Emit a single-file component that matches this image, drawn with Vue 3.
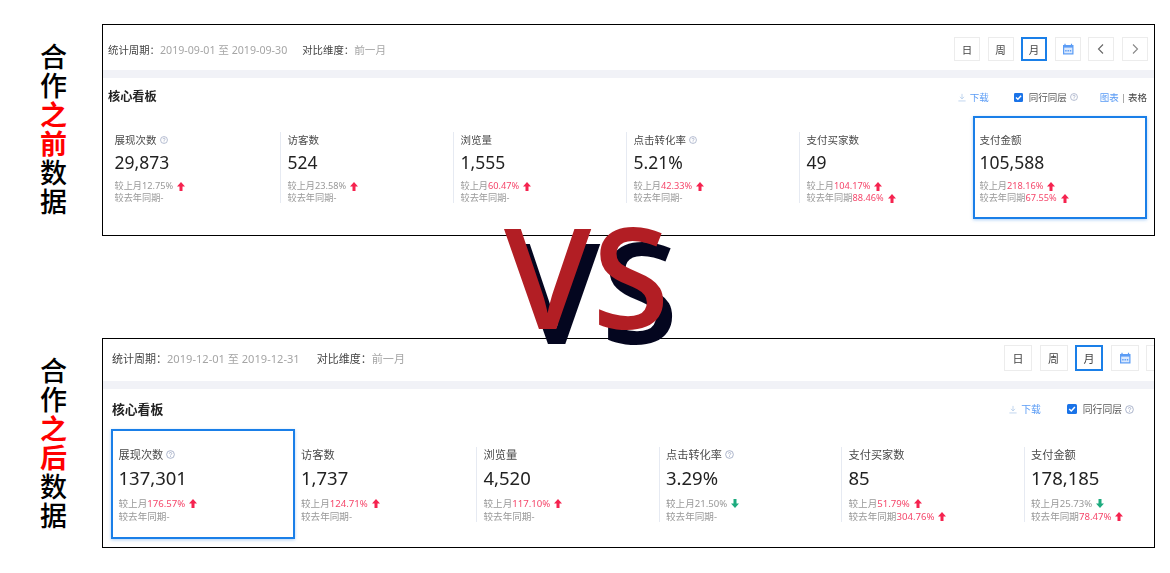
<script setup>
const panels = [
  {
    key: 'before',
    label: [['合', 0], ['作', 0], ['之', 1], ['前', 1], ['数', 0], ['据', 0]],
    range: '2019-09-01 至 2019-09-30',
    modes: true,
    selected: 5,
    metrics: [
      { title: '展现次数', help: true, value: '29,873', mom: '12.75%', momHot: false, momDir: 'up' },
      { title: '访客数', value: '524', mom: '23.58%', momHot: false, momDir: 'up' },
      { title: '浏览量', value: '1,555', mom: '60.47%', momHot: true, momDir: 'up' },
      { title: '点击转化率', help: true, value: '5.21%', mom: '42.33%', momHot: true, momDir: 'up' },
      { title: '支付买家数', value: '49', mom: '104.17%', momHot: true, momDir: 'up', yoy: '88.46%' },
      { title: '支付金额', value: '105,588', mom: '218.16%', momHot: true, momDir: 'up', yoy: '67.55%' }
    ]
  },
  {
    key: 'after',
    label: [['合', 0], ['作', 0], ['之', 1], ['后', 1], ['数', 0], ['据', 0]],
    range: '2019-12-01 至 2019-12-31',
    modes: false,
    selected: 0,
    metrics: [
      { title: '展现次数', help: true, value: '137,301', mom: '176.57%', momHot: true, momDir: 'up' },
      { title: '访客数', value: '1,737', mom: '124.71%', momHot: true, momDir: 'up' },
      { title: '浏览量', value: '4,520', mom: '117.10%', momHot: true, momDir: 'up' },
      { title: '点击转化率', help: true, value: '3.29%', mom: '21.50%', momHot: false, momDir: 'down' },
      { title: '支付买家数', value: '85', mom: '51.79%', momHot: true, momDir: 'up', yoy: '304.76%' },
      { title: '支付金额', value: '178,185', mom: '25.73%', momHot: false, momDir: 'down', yoy: '78.47%' }
    ]
  }
]
</script>

<template>
  <div class="page">
    <section v-for="p in panels" :key="p.key" class="row" :class="p.key">
      <div class="side">
        <span v-for="(c, i) in p.label" :key="i" class="side-char" :class="{ red: c[1] }">{{ c[0] }}</span>
      </div>
      <div class="panel">
        <div class="inner">
          <div class="toolbar">
            <div class="period">
              <span class="lab">统计周期：</span><span class="val">{{ p.range }}</span>
              <span class="lab second">对比维度：</span><span class="val">前一月</span>
            </div>
            <div class="btns">
              <span class="btn">日</span>
              <span class="btn">周</span>
              <span class="btn on">月</span>
              <span class="btn">
                <svg class="cal" viewBox="0 0 12 12">
                  <path d="M1 2h10.500v9.500H1z" fill="#5b9cf5" />
                  <path d="M3 .7v2M9.500 .7v2" stroke="#5b9cf5" stroke-width="1.200" />
                  <path d="M2.200 4.600h8.100v5.700H2.200z" fill="#dbe9fd" />
                  <path d="M3.200 7h1.400v1.500H3.200zM5.500 7h1.400v1.500H5.500zM7.800 7h1.400v1.500H7.800z" fill="#5b9cf5" />
                </svg>
              </span>
              <span class="btn">
                <svg class="chev" viewBox="0 0 10 12"><path d="M7 1.500 2.500 6 7 10.500" fill="none" stroke="#666" stroke-width="1.100" /></svg>
              </span>
              <span class="btn">
                <svg class="chev" viewBox="0 0 10 12"><path d="M3 1.500 7.500 6 3 10.500" fill="none" stroke="#888" stroke-width="1.100" /></svg>
              </span>
            </div>
          </div>
          <div class="band"></div>
          <div class="head">
            <span class="heading">核心看板</span>
            <div class="tools">
              <span class="dl">
                <svg class="dl-icon" viewBox="0 0 10 10"><path d="M5 .5v6M2.500 4.200 5 6.800l2.500-2.600M.5 9.300h9" fill="none" stroke="#a9c4e8" stroke-width=".9" /></svg>
                <span>下载</span>
              </span>
              <span class="peer">
                <svg class="check" viewBox="0 0 10 10">
                  <rect width="10" height="10" rx="1.500" fill="#1a73e8" />
                  <path d="M2.200 5 4.300 7 7.900 3" fill="none" stroke="#fff" stroke-width="1.500" />
                </svg>
                <span class="peer-text">同行同层</span>
                <svg class="help" viewBox="0 0 10 10">
                  <circle cx="5" cy="5" r="4.300" fill="none" stroke="#9aa5c0" stroke-width=".9" />
                  <path d="M3.700 4c0-1.700 2.700-1.700 2.700 0 0 1-1.400 1-1.400 2.100M5 6.900v.9" fill="none" stroke="#9aa5c0" stroke-width=".9" />
                </svg>
              </span>
              <span v-if="p.modes" class="modes"><em>图表</em><i>|</i><b>表格</b></span>
            </div>
          </div>
          <div class="metrics">
            <div v-for="(m, i) in p.metrics" :key="m.title" class="cell" :class="{ first: i === 0, sel: i === p.selected }">
              <div class="m-title">
                <span>{{ m.title }}</span>
                <svg v-if="m.help" class="help" viewBox="0 0 10 10">
                  <circle cx="5" cy="5" r="4.300" fill="none" stroke="#9aa5c0" stroke-width=".9" />
                  <path d="M3.700 4c0-1.700 2.700-1.700 2.700 0 0 1-1.400 1-1.400 2.100M5 6.900v.9" fill="none" stroke="#9aa5c0" stroke-width=".9" />
                </svg>
              </div>
              <div class="m-value">{{ m.value }}</div>
              <div class="m-sub first-sub">
                <span>较上月</span><span :class="{ hot: m.momHot }">{{ m.mom }}</span>
                <svg class="arrow" viewBox="0 0 8 9">
                  <path v-if="m.momDir === 'up'" d="M4 0 8 4.500H5.500V9h-3V4.500H0z" fill="#f5234f" />
                  <path v-else d="M4 9 8 4.500H5.500V0h-3v4.500H0z" fill="#1dab7e" />
                </svg>
              </div>
              <div class="m-sub">
                <span>较去年同期</span><template v-if="m.yoy"><span class="hot">{{ m.yoy }}</span>
                  <svg class="arrow" viewBox="0 0 8 9"><path d="M4 0 8 4.500H5.500V9h-3V4.500H0z" fill="#f5234f" /></svg>
                </template><span v-else>-</span>
              </div>
            </div>
          </div>
        </div>
      </div>
    </section>
    <div class="vs">VS</div>
  </div>
</template>

<style>
html, body { background: #fff; }
</style>

<style scoped>
.page {
  position: relative;
  width: 1170px;
  height: 573px;
  overflow: hidden;
  background: #fff;
  padding-top: 24px;
  box-sizing: border-box;
  font-family: "Noto Sans", "Noto Sans CJK SC", sans-serif;
}
.row { display: flex; align-items: flex-start; }
.row.after { margin-top: 102px; }
.side {
  flex: 0 0 102px;
  box-sizing: border-box;
  display: flex;
  flex-direction: column;
  align-items: flex-start;
  padding: 17px 0 0 40px;
  font-family: "Noto Sans CJK SC", sans-serif;
  font-size: 27px;
  font-weight: 500;
  line-height: 29px;
  color: #000;
}
.side-char.red { color: #f00; font-weight: 700; }
.panel {
  flex: 0 0 1053px;
  box-sizing: border-box;
  border: 1px solid #000;
  height: 212px;
  overflow: hidden;
}
.after .panel { height: 210px; }
.inner { filter: blur(.4px); height: 100%; }

.toolbar { display: flex; align-items: center; box-sizing: border-box; height: 45px; padding-top: 3px; }
.after .toolbar { height: 42px; padding: 0 0 4px; }
.period {
  flex: 0 0 851px;
  box-sizing: border-box;
  padding-left: 5px;
  font-size: 10.400px;
  white-space: nowrap;
}
.after .period { flex-basis: 901px; padding-left: 9px; font-size: 11px; }
.lab { color: #444; }
.val { color: #a5a5a5; font-size: 10.650px; }
.after .val { font-size: 11.100px; }
.second { margin-left: 15px; }
.after .second { margin-left: 17px; }
.btns { display: flex; gap: 7.500px; flex-shrink: 0; }
.btn {
  box-sizing: border-box;
  width: 26px;
  height: 24px;
  border: 1.500px solid #ececec;
  display: flex;
  align-items: center;
  justify-content: center;
  font-size: 10.500px;
  color: #444;
}
.after .btn { width: 28px; height: 26px; font-size: 11px; }
.btn.on { border: 2px solid #1a7fe8; }
.cal { width: 12px; height: 12px; }
.chev { width: 10px; height: 12px; }

.band { height: 8px; background: #f1f2f7; }

.head {
  display: flex;
  align-items: center;
  height: 38px;
  padding: 0 7px 0 5px;
}
.after .head { height: 40px; padding: 0 20px 0 9px; }
.heading { font-size: 12.200px; font-weight: 700; color: #222; margin-top: -2px; }
.after .heading { font-size: 12.800px; }
.tools {
  margin-left: auto;
  display: flex;
  align-items: center;
  font-size: 9.500px;
  white-space: nowrap;
}
.after .tools { font-size: 9.800px; }
.dl { display: flex; align-items: center; gap: 4px; color: #5b9cf5; margin-right: 25px; }
.after .dl { margin-right: 26px; }
.dl-icon { width: 8px; height: 9px; }
.peer { display: flex; align-items: center; color: #555; }
.check { width: 9px; height: 9px; margin-right: 6px; }
.after .check { width: 10px; height: 10px; }
.help { width: 8px; height: 8px; margin-left: 3px; }
.after .help { width: 9px; height: 9px; }
.modes { display: flex; align-items: center; margin-left: 22px; }
.modes em { font-style: normal; color: #5b9cf5; }
.modes i { font-style: normal; color: #888; margin: 0 2px; }
.modes b { font-weight: 400; color: #444; }

.metrics { display: flex; margin: 16px 0 0 4px; }
.after .metrics { margin: 18px 0 0 8px; }
.cell {
  position: relative;
  flex: 0 0 173px;
  box-sizing: border-box;
  height: 71px;
  padding-left: 6.500px;
  border-left: 1px solid #e6eaf2;
}
.after .cell { flex-basis: 182.500px; height: 75px; }
.cell.first, .cell.sel { border-left-color: transparent; }
.cell.sel { z-index: 1; }
.cell.sel::after {
  content: "";
  position: absolute;
  top: -16px;
  bottom: -16px;
  left: 0;
  right: -2px;
  border: 2px solid #1a7fe8;
  box-shadow: 0 1px 3px rgba(26, 127, 232, .35);
}
.after .cell.sel::after { top: -18px; bottom: -17px; right: -1px; left: -1px; }
.m-title { display: flex; align-items: center; font-size: 10.500px; line-height: 16px; color: #4a4a4a; white-space: nowrap; }
.after .m-title { font-size: 11.200px; line-height: 15px; }
.m-value { margin-top: 2px; font-size: 17.500px; line-height: 24px; color: #222; }
.after .m-value { margin-top: 3px; font-size: 18.500px; line-height: 26px; }
.m-sub { display: flex; align-items: center; font-size: 9.200px; line-height: 12px; color: #999; white-space: nowrap; }
.after .m-sub { font-size: 9.600px; line-height: 13px; }
.first-sub { margin-top: 6px; }
.hot { color: #f5476b; }
.arrow { width: 8px; height: 9px; margin-left: 4px; }

.vs {
  position: absolute;
  left: 504px;
  top: 185px;
  font-family: "Open Sans", sans-serif;
  font-size: 140px;
  line-height: 180px;
  font-weight: 600;
  letter-spacing: 1px;
  color: #b21e24;
  text-shadow: 9px 15px 0 #04061f;
}
</style>
